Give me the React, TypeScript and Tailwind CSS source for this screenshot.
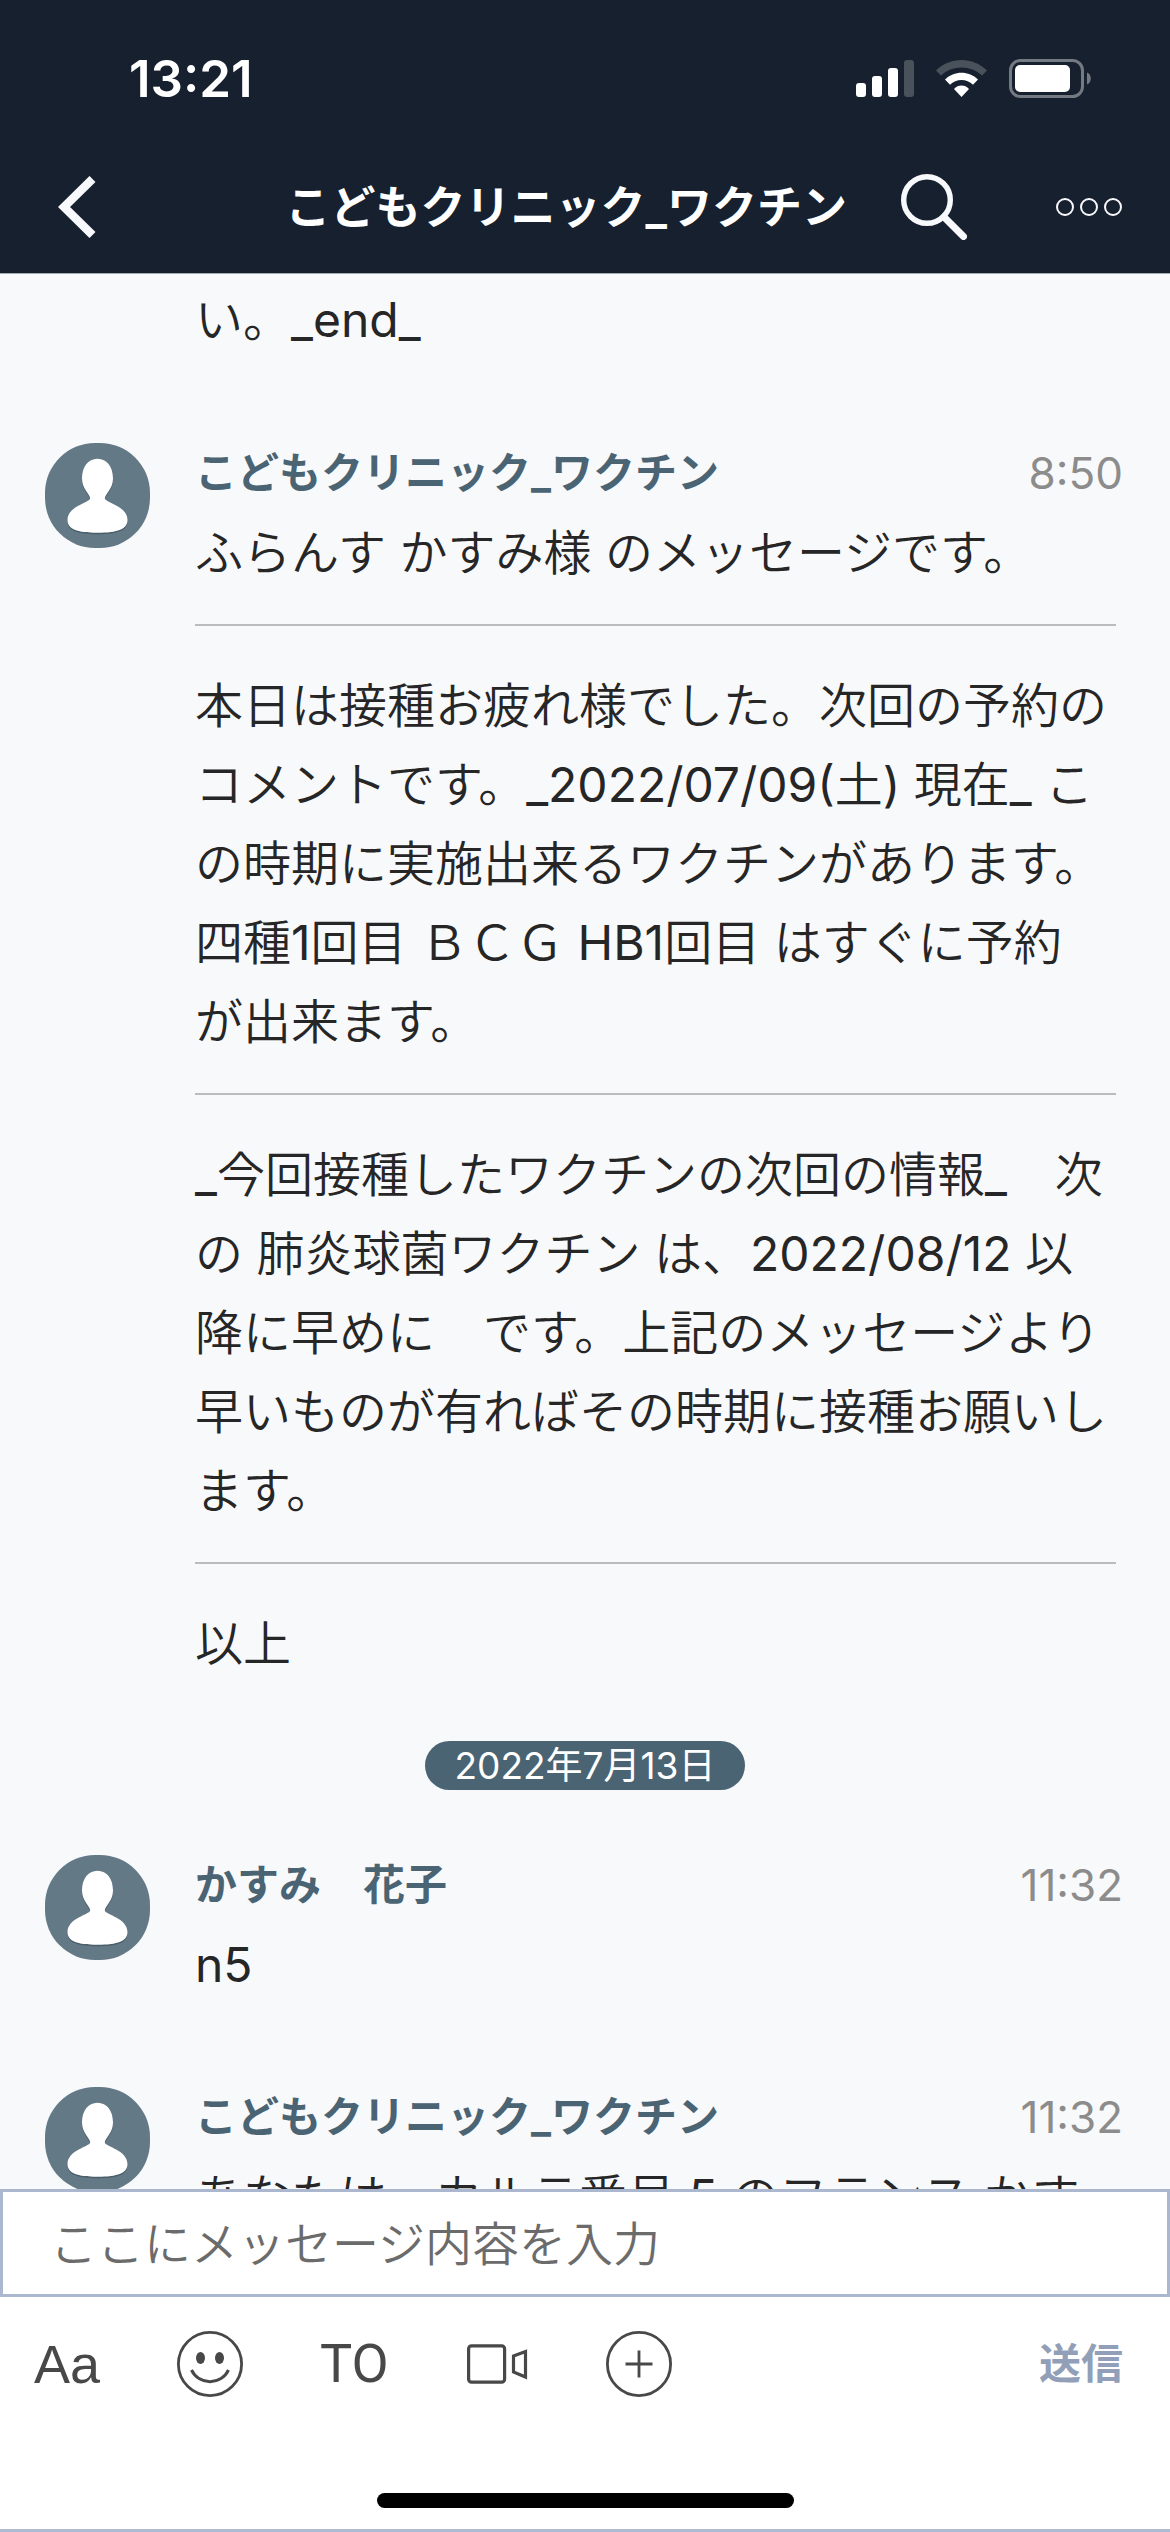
type Block = { text: string };

type Message = {
  id: number;
  author: string;
  time: string;
  blocks: Block[];
};

const clinicMessage: Message = {
  id: 1,
  author: "こどもクリニック_ワクチン",
  time: "8:50",
  blocks: [
    { text: "ふらんす かすみ様 のメッセージです。" },
    {
      text: "本日は接種お疲れ様でした。次回の予約の\nコメントです。_2022/07/09(土) 現在_ こ\nの時期に実施出来るワクチンがあります。\n四種1回目 ＢＣＧ HB1回目 はすぐに予約\nが出来ます。",
    },
    {
      text: "_今回接種したワクチンの次回の情報_　次\nの 肺炎球菌ワクチン は、2022/08/12 以\n降に早めに　です。上記のメッセージより\n早いものが有ればその時期に接種お願いし\nます。",
    },
    { text: "以上" },
  ],
};

const laterMessages: Message[] = [
  { id: 2, author: "かすみ　花子", time: "11:32", blocks: [{ text: "n5" }] },
  {
    id: 3,
    author: "こどもクリニック_ワクチン",
    time: "11:32",
    blocks: [{ text: "あなたは、カルテ番号 5 のフランス かす" }],
  },
];

const bodyFont = "font-['Inter','Noto_Sans_CJK_JP_DemiLight','Noto_Sans_CJK_JP',sans-serif]";

const personPath =
  "M52.5 15.7C62 15.7 68 24 68 35.5C68 46 60 51 59.8 55.5C60 59.5 82.5 63 82.5 77C82.5 86 73 89.8 52.5 89.8C32 89.8 22.5 86 22.5 77C22.5 63 45 59.5 45.2 55.5C45 51 37 46 37 35.5C37 24 43 15.7 52.5 15.7Z";

function Avatar() {
  return (
    <svg viewBox="0 0 105 105" className="size-[105px] shrink-0" aria-hidden="true">
      <rect width="105" height="105" rx="50" fill="#637986" />
      <path d={personPath} fill="#4b5f6b" transform="translate(0 1.6)" />
      <path d={personPath} fill="#fff" />
    </svg>
  );
}

function StatusBar() {
  return (
    <div className="flex h-[156px] items-center justify-between pl-[129px] pr-[79px]">
      <span className="text-[51px] font-semibold leading-none">13:21</span>
      <div className="flex items-center gap-[22px]">
        <svg viewBox="0 0 58 37" className="h-[37px] w-[58px]" fill="#fff" aria-hidden="true">
          <rect x="0" y="23" width="10" height="14" rx="3" />
          <rect x="16" y="16" width="10" height="21" rx="3" />
          <rect x="32" y="8" width="10" height="29" rx="3" />
          <rect x="48" y="0" width="10" height="37" rx="3" fillOpacity="0.22" />
        </svg>
        <svg viewBox="0 0 51 37" className="h-[37px] w-[51px]" fill="#fff" aria-hidden="true">
          <path d="M0 10.5C14 -3.5 37 -3.5 51 10.5L46 15.5C35 4.8 16 4.8 5 15.5Z" fillOpacity="0.22" />
          <path d="M9 19.5C18 10.5 33 10.5 42 19.5L37 24.7C31 18.4 20 18.4 14 24.7Z" />
          <path d="M18 29C22 24.4 29 24.4 33 29L25.5 37Z" />
        </svg>
        <svg viewBox="0 0 82 39" className="h-[39px] w-[82px]" aria-hidden="true">
          <rect x="1.5" y="1.5" width="72" height="36" rx="10" fill="none" stroke="#747982" strokeWidth="3" />
          <rect x="6" y="6" width="55" height="27" rx="5" fill="#fff" />
          <path d="M78 13.5C83 15 83 24 78 25.5Z" fill="#747982" />
        </svg>
      </div>
    </div>
  );
}

function ChatHeader() {
  return (
    <header className="border-b border-[#a3a9b2] bg-[#17202e] pb-[15px] text-white">
      <StatusBar />
      <nav className="flex h-[102px] items-center pl-[58px] pr-[47px]">
        <button type="button" aria-label="戻る">
          <svg viewBox="0 0 38 62" className="h-[62px] w-[38px]" fill="none" stroke="#f8f9fc" strokeWidth="8.5" aria-hidden="true">
            <path d="M34.5 3L6 31L34.5 59" />
          </svg>
        </button>
        <h1 className="ml-auto mr-[54px] text-[45px] font-bold leading-none">こどもクリニック_ワクチン</h1>
        <button type="button" aria-label="検索" className="mr-[88px]">
          <svg viewBox="0 0 66 66" className="size-[66px]" fill="none" stroke="#f8f9fc" aria-hidden="true">
            <circle cx="26" cy="26" r="23.3" strokeWidth="5.4" />
            <path d="M43 43L62.5 62.5" strokeWidth="7" strokeLinecap="round" />
          </svg>
        </button>
        <button type="button" aria-label="メニュー">
          <svg viewBox="0 0 68 18" className="h-[18px] w-[68px]" fill="none" stroke="#f8f9fc" strokeWidth="2" aria-hidden="true">
            <circle cx="10" cy="9" r="8" />
            <circle cx="34" cy="9" r="8" />
            <circle cx="58" cy="9" r="8" />
          </svg>
        </button>
      </nav>
    </header>
  );
}

function MessageItem({ message }: { message: Message }) {
  return (
    <article className="flex gap-[45px] pl-[45px] pr-[47px]">
      <Avatar />
      <div className="min-w-0 flex-1">
        <div className="flex h-[70px] items-center justify-between pb-[11px]">
          <h2 className="text-[42px] font-bold leading-none text-[#4b6473]">{message.author}</h2>
          <time className="text-[44px] leading-none text-[#8c8c8c]">{message.time}</time>
        </div>
        <div className={`mr-[7px] text-[48px] leading-[79px] text-[#262626] ${bodyFont}`}>
          {message.blocks.map((block, i) => (
            <p
              key={i}
              className="mt-[32px] whitespace-pre border-t-2 border-[#babcbe] pt-[40px] first:mt-0 first:border-0 first:pt-0"
            >
              {block.text}
            </p>
          ))}
        </div>
      </div>
    </article>
  );
}

function Composer() {
  return (
    <footer className="shrink-0 border-b-[3px] border-[#aebbd2] bg-white">
      <label htmlFor="message" className="sr-only">
        メッセージ
      </label>
      <input
        id="message"
        type="text"
        placeholder="ここにメッセージ内容を入力"
        className={`block h-[108px] w-full border-[3px] border-[#aab7cf] bg-white px-[47px] text-[47px] text-[#262626] outline-none placeholder:text-[#6b6b6b] ${bodyFont}`}
      />
      <div className="flex h-[134px] items-center gap-[77px] pl-[34px] pr-[47px] text-[#484848]">
        <button type="button" aria-label="書式" className="w-[66px] font-['Liberation_Sans'] text-[54px] leading-none">
          Aa
        </button>
        <button type="button" aria-label="絵文字">
          <svg viewBox="0 0 66 66" className="size-[66px]" fill="none" stroke="currentColor" aria-hidden="true">
            <circle cx="33" cy="33" r="31.6" strokeWidth="2.8" />
            <path d="M14.5 39C22 54.5 44 54.5 51.5 39" strokeWidth="3" />
            <ellipse cx="23.5" cy="27" rx="4.5" ry="6" fill="currentColor" stroke="none" />
            <ellipse cx="42.5" cy="27" rx="4.5" ry="6" fill="currentColor" stroke="none" />
          </svg>
        </button>
        <button type="button" aria-label="宛先" className="w-[66px] font-['Roboto'] text-[54px] leading-none">
          TO
        </button>
        <button type="button" aria-label="ビデオ通話">
          <svg viewBox="0 0 66 40" className="h-[40px] w-[66px]" fill="none" stroke="currentColor" strokeWidth="3.2" aria-hidden="true">
            <rect x="5.6" y="1.8" width="36" height="36.4" rx="3" />
            <path d="M50.5 12L62.5 7.5V33L50.5 28Z" />
          </svg>
        </button>
        <button type="button" aria-label="追加">
          <svg viewBox="0 0 66 66" className="size-[66px]" fill="none" stroke="currentColor" strokeWidth="2.8" aria-hidden="true">
            <circle cx="33" cy="33" r="31.6" />
            <path d="M19.5 33H46.5M33 19.5V46.5" />
          </svg>
        </button>
        <button type="button" className="ml-auto text-[42px] font-bold leading-none text-[#929fb8]">
          送信
        </button>
      </div>
      <div className="mx-auto mb-[21px] mt-[62px] h-[15px] w-[417px] rounded-full bg-black" />
    </footer>
  );
}

export default function App() {
  return (
    <div
      lang="ja"
      className="flex h-screen w-full flex-col bg-[#f8f9fb] font-['Inter','Noto_Sans_CJK_JP',sans-serif]"
    >
      <ChatHeader />
      <main className="min-h-0 flex-1 overflow-hidden pt-[6px]">
        <p className={`pl-[195px] text-[48px] leading-[79px] text-[#262626] ${bodyFont}`}>い。_end_</p>
        <div className="mt-[84px]">
          <MessageItem message={clinicMessage} />
        </div>
        <div className="mb-[65px] mt-[58px] flex justify-center">
          <time className="flex h-[49px] items-center rounded-full bg-[#4b6473] px-[30px] text-[37px] leading-none text-white">
            2022年7月13日
          </time>
        </div>
        <div className="flex flex-col gap-[83px]">
          {laterMessages.map((message) => (
            <MessageItem key={message.id} message={message} />
          ))}
        </div>
      </main>
      <Composer />
    </div>
  );
}
